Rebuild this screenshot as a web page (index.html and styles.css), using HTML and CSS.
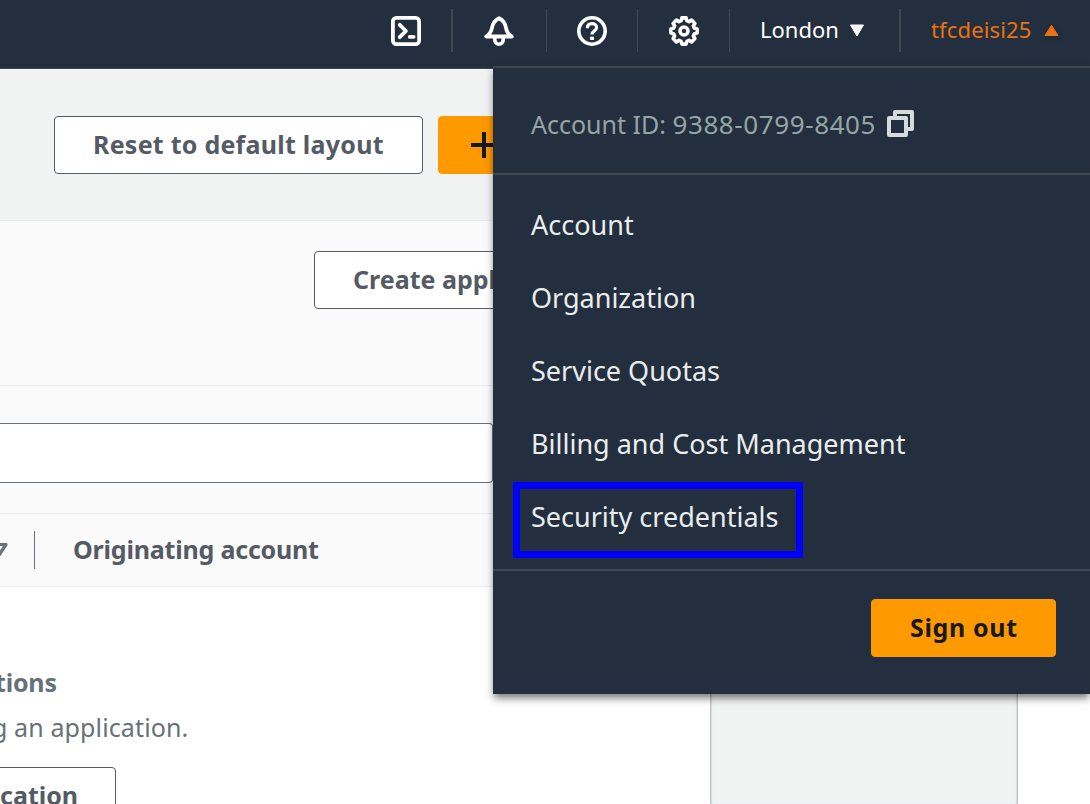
FILE: index.html
```html
<!DOCTYPE html>
<html lang="en">
<head>
<meta charset="utf-8">
<title>Console Home</title>
<link rel="stylesheet" href="styles.css">
</head>
<body>
<header class="topnav">
  <div class="cell cell-shell"><svg width="30" height="30" viewBox="0 0 30 30" fill="none" stroke="#fff" stroke-width="3.8" stroke-linejoin="round"><rect x="1.9" y="1.9" width="26.2" height="26.2" rx="3.5"/><path d="M8.7 8.800l6.200 6.200-6.200 6.200" stroke-linecap="round"/><path d="M18.700 20.900h4" stroke-width="3.600" stroke-linecap="round"/></svg></div>
  <div class="cell cell-bell"><svg width="30" height="30" viewBox="0 0 30 30" fill="none" stroke="#fff" stroke-width="3.800" stroke-linejoin="round"><path d="M2.200 20.500h25.600c-3.200-2.200-5-4.200-5.700-8.200C21.300 7.300 19 4 15 2.200 11 4 8.700 7.300 7.900 12.300 7.200 16.300 5.400 18.300 2.200 20.500z"/><path d="M10.800 21v3a4.200 4.200 0 0 0 8.400 0v-3" stroke-width="3.600"/></svg></div>
  <div class="cell cell-help"><svg width="30" height="30" viewBox="0 0 30 30" fill="none" stroke="#fff" stroke-width="3.600"><circle cx="15" cy="15" r="13.200"/><path d="M10.400 12.300c0-3.100 2-4.700 4.600-4.700s4.600 1.600 4.600 4c0 3.300-4.600 3.200-4.600 6.800" stroke-width="3.200"/><path d="M13.100 20.700h3.900v3.300h-3.900z" fill="#fff" stroke="none"/></svg></div>
  <div class="cell cell-gear"><svg width="30" height="30" viewBox="0 0 30 30" fill="none" stroke="#fff" stroke-width="3.600" stroke-linejoin="round"><path d="M12.900 1.900h4.200l.8 2.800 2.100.9 2.600-1.500 3.300 3.300-1.500 2.600.9 2.100 2.800.8v4.200l-2.800.8-.9 2.100 1.500 2.600-3.300 3.300-2.600-1.500-2.100.9-.8 2.800h-4.200l-.8-2.800-2.100-.9-2.600 1.500-3.300-3.300 1.500-2.600-.9-2.100-2.800-.8v-4.200l2.800-.8.9-2.100-1.500-2.600 3.300-3.300 2.600 1.500 2.100-.9z"/><circle cx="15" cy="15" r="4"/></svg></div>
  <div class="cell cell-region"><span>London</span><svg width="16" height="13" viewBox="0 0 16 13"><path d="M1.500 1h13L8 12z" fill="#fff" stroke="#fff" stroke-linejoin="round"/></svg></div>
  <div class="cell cell-user"><span>tfcdeisi25</span><svg class="caret-up" width="15" height="13" viewBox="0 0 15 13"><path d="M1 11.500h13L7.500 1.300z" fill="#ec7211" stroke="#ec7211" stroke-linejoin="round"/></svg></div>
</header>
<main class="page">
  <div class="toolbar">
    <button class="btn btn-reset">Reset to default layout</button>
    <button class="btn btn-primary btn-add"><svg width="28" height="28" viewBox="0 0 28 28" stroke="#16191f" stroke-width="4"><path d="M1 14h26M14 1v26"/></svg></button>
  </div>
  <div class="board">
    <section class="card">
      <div class="card-head"><button class="btn btn-create">Create appl</button></div>
      <div class="search-row"><div class="search"></div></div>
      <div class="columns">
        <svg width="8" height="14" viewBox="0 0 8 14"><path d="M-8 1.500H6L-1 12z" fill="none" stroke="#687078" stroke-width="3.200" stroke-linejoin="round"/></svg>
        <i class="split"></i>
        <span class="column-name">Originating account</span>
      </div>
      <div class="empty">
        <b class="empty-title">tions</b>
        <span class="empty-text">g an application.</span>
        <button class="btn btn-more">cation</button>
      </div>
    </section>
    <div class="gutter"></div>
    <section class="side"></section>
  </div>
</main>
<aside class="menu">
  <div class="account"><span class="account-id">Account ID: <span class="digits">9388-0799-8405</span></span><svg width="27" height="27" viewBox="0 0 27 27" fill="none" stroke="#d5dbdb" stroke-width="4" stroke-linejoin="round"><path d="M2 8h17v17H2z"/><path d="M8 8V2h17v17h-6"/></svg></div>
  <nav class="links">
    <a>Account</a>
    <a>Organization</a>
    <a>Service Quotas</a>
    <a>Billing and Cost Management</a>
    <a>Security credentials</a>
  </nav>
  <div class="menu-foot"><button class="btn btn-primary btn-signout">Sign out</button></div>
  <div class="highlight"></div>
</aside>
</body>
</html>
```
FILE: styles.css
```css
* { box-sizing: border-box; }
body { margin: 0; width: 1090px; height: 804px; overflow: hidden; position: relative; display: flex; flex-direction: column; background: #fff; font-family: "Noto Sans", sans-serif; white-space: nowrap; }
svg { display: block; flex: none; }
.topnav { height: 69px; flex: none; display: flex; justify-content: flex-end; padding-top: 9px; background: #232f3e; border-bottom: 1px solid #414750; }
.cell { height: 43px; display: flex; align-items: center; justify-content: center; border-right: 1px solid #414750; color: #fff; font-size: 22px; }
.cell span { padding-bottom: 3px; }
.cell-shell { width: 93px; border-right-width: 2px; }
.cell-bell { width: 94px; padding-right: 1px; }
.cell-help { width: 91px; }
.cell-gear { width: 92px; }
.cell-region { width: 171px; border-right-width: 2px; justify-content: flex-start; padding-left: 30px; gap: 10px; }
.cell-region span { width: 79px; }
.cell-user { width: 189px; border: 0; justify-content: flex-start; padding-left: 30px; gap: 12px; color: #ec7211; }
.cell-user span { width: 101px; letter-spacing: 0.15px; }
.caret-up { filter: drop-shadow(1px 2px 2px #16191f80); }
.page { flex: 1; min-height: 0; display: flex; flex-direction: column; }
.toolbar { height: 151px; flex: none; background: #f1f3f3; padding: 47px 0 0 54px; display: flex; gap: 15px; }
.btn { height: 58px; flex: none; border: 1px solid #545b64; border-radius: 4px; background: #fff; color: #545b64; padding: 0 38px 2px; font: bold 25px/1 "Noto Sans", sans-serif; letter-spacing: 0.25px; text-align: left; white-space: nowrap; }
.btn-reset { width: 369px; }
.btn-primary { background: #f90; border-color: #f90; color: #16191f; }
.btn-add { width: 200px; padding: 0 31px; }
.board { flex: 1; min-height: 0; display: flex; }
.card { width: 710px; display: flex; flex-direction: column; background: #fff; border-top: 1px solid #e9ebed; }
.card-head { height: 165px; flex: none; padding: 30px 0 0 314px; background: #fafafa; border-bottom: 1px solid #eaeded; }
.btn-create { width: 300px; letter-spacing: 0; }
.search-row { height: 128px; flex: none; padding-top: 37px; background: #fafafa; border-bottom: 1px solid #eaeded; }
.search { width: 493px; height: 60px; background: #fff; border: 1px solid #687078; border-left: 0; border-radius: 0 4px 4px 0; }
.columns { height: 73px; flex: none; display: flex; align-items: center; background: #fafafa; border-bottom: 1px solid #eaeded; font-weight: bold; font-size: 25px; color: #545b64; }
.column-name { letter-spacing: -0.2px; padding-bottom: 2px; }
.split { width: 1px; height: 38px; margin: 0 38px 0 26px; background: #687078; }
.empty { display: flex; flex-direction: column; align-items: flex-start; padding-top: 77px; color: #687078; font-size: 25px; line-height: 36px; }
.empty-title { margin-left: -5px; letter-spacing: -0.2px; }
.empty-text { margin: 9px 0 22px -8px; letter-spacing: 0.12px; }
.btn-more { width: 124px; margin-left: -8px; padding-left: 7px; letter-spacing: 0; }
.gutter { width: 308px; background: #f1f3f3; border: solid #bcc4c6; border-width: 0 1px; box-shadow: inset 1px 0 1px #d5dbdb, inset -1px 0 1px #d5dbdb; }
.side { flex: 1; background: #fff; }
.menu { position: absolute; top: 66px; left: 493px; right: 0; height: 628px; display: flex; flex-direction: column; background: #232f3e; border-top: 2px solid #414750; box-shadow: 0 5px 8px -1px #0008; color: #eaeded; }
.account { height: 107px; flex: none; padding: 6px 0 0 38px; display: flex; align-items: center; gap: 10px; border-bottom: 2px solid #414750; color: #95a5a6; font-size: 25px; }
.account-id { width: 346px; }
.digits { font-size: 26px; letter-spacing: 0.6px; }
.links { height: 396px; flex: none; padding: 13px 38px 0; display: flex; flex-direction: column; border-bottom: 2px solid #414750; font-size: 27px; }
.links a { height: 73.1px; line-height: 73px; }
.menu-foot { padding: 28px 34px 0; display: flex; justify-content: flex-end; }
.btn-signout { width: 185px; letter-spacing: 0.65px; }
.highlight { position: absolute; left: 20px; top: 414px; width: 290px; height: 76px; border: 7px solid #00f; }
```
